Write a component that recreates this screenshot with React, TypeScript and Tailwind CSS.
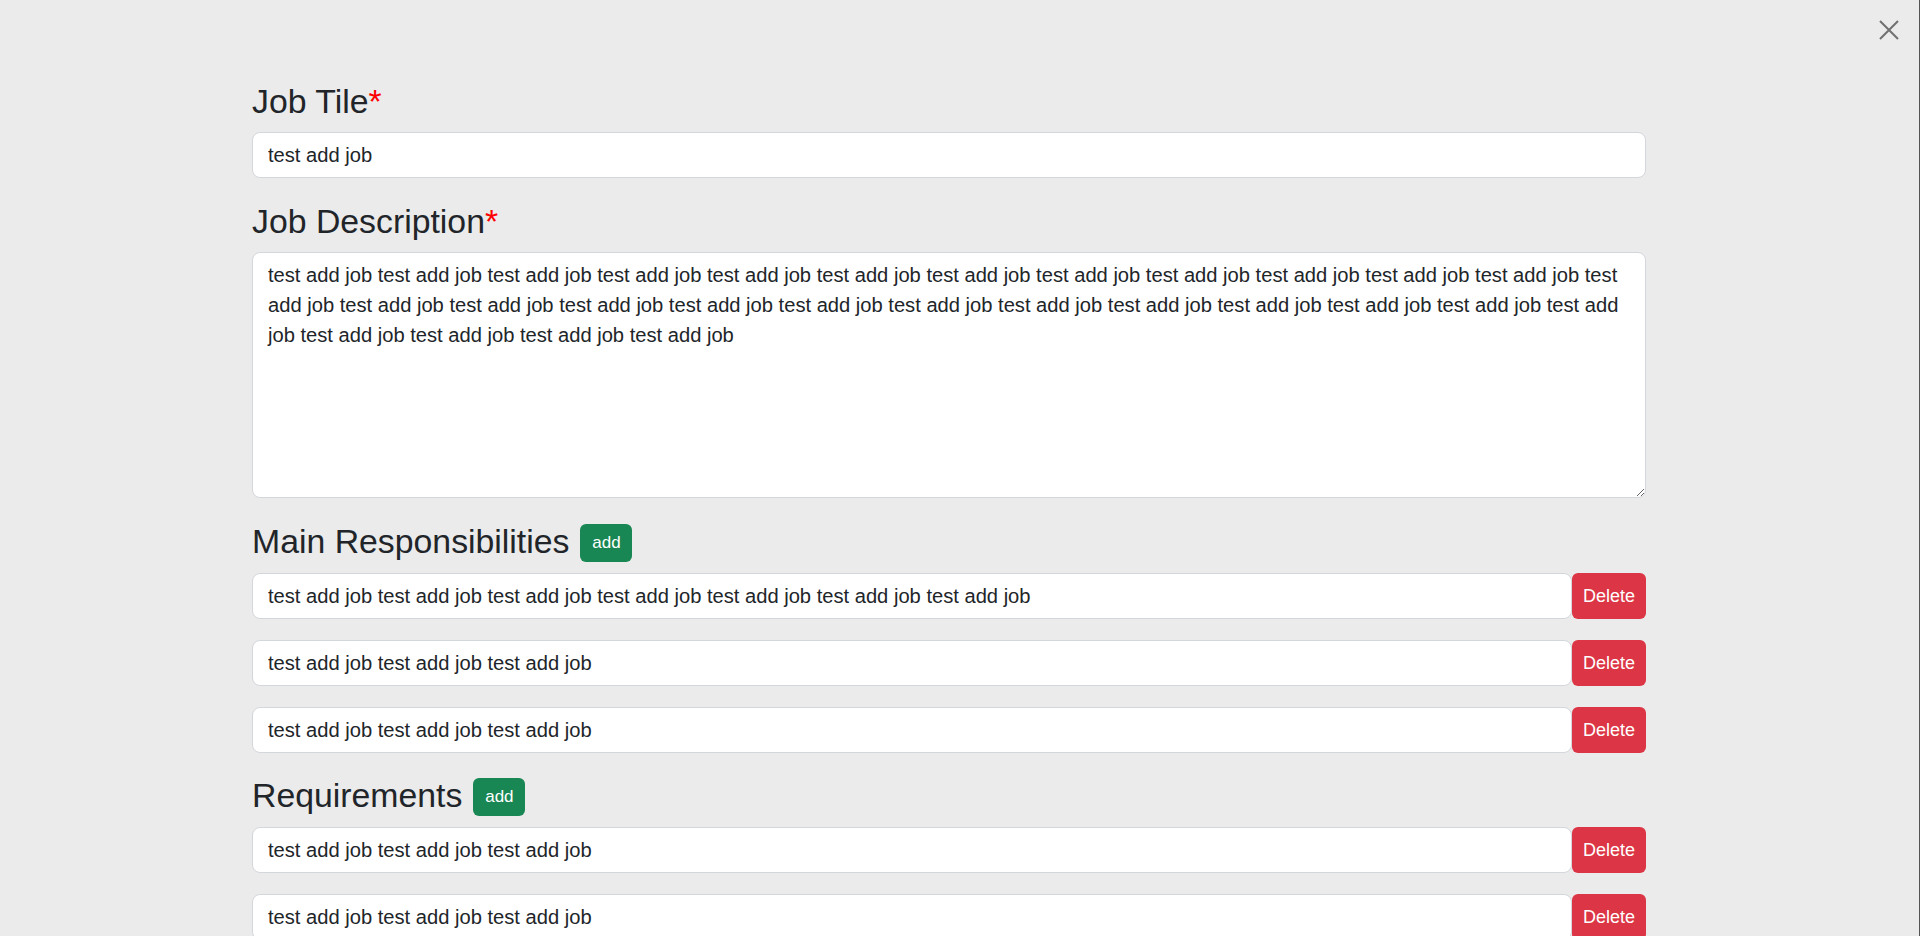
import React from "react";

const font = { fontFamily: '"Liberation Sans", Arial, sans-serif' };

function Heading({ children, req, onAdd }: { children: React.ReactNode; req?: boolean; onAdd?: boolean }) {
  return (
    <div className="flex items-center h-[40px]">
      <span className="text-[33.8px] leading-[40px] text-[#212529] whitespace-nowrap">
        {children}
        {req && <span className="text-[#ff0000]">*</span>}
      </span>
      {onAdd && (
        <button className="ml-[11px] mt-[3px] h-[38px] w-[52px] rounded-[6px] bg-[#198754] text-white text-[17px] leading-[24px] flex items-center justify-center">
          add
        </button>
      )}
    </div>
  );
}

const inputCls =
  "block w-full h-[46px] rounded-[8px] border border-[#d3d6db] bg-white px-[15px] text-[20.15px] text-[#212529] outline-none";

function Row({ text }: { text: string }) {
  return (
    <div className="flex h-[46px]">
      <input readOnly value={text} className={inputCls + " flex-1 min-w-0"} style={font} />
      <button className="w-[74px] h-[46px] rounded-[6px] bg-[#dc3545] text-white text-[18px] flex items-center justify-center shrink-0" style={font}>
        Delete
      </button>
    </div>
  );
}

export default function App() {
  const desc = Array(29).fill("test add job").join(" ");
  const three = "test add job test add job test add job";
  const seven = Array(7).fill("test add job").join(" ");
  return (
    <div className="relative w-[1920px] h-[936px] overflow-hidden bg-[#ebebeb] border-r border-[#555]" style={font}>
      <button className="absolute left-[1879px] top-[20px] w-[20px] h-[20px]">
        <svg width="20" height="20" viewBox="0 0 20 20">
          <path d="M1 1 L19 19 M19 1 L1 19" stroke="#707070" strokeWidth="2" fill="none" />
        </svg>
      </button>
      <div className="ml-[252px] w-[1394px] pt-[81px]">
        <Heading req>Job Tile</Heading>
        <div className="mt-[11px]">
          <input readOnly value="test add job" className={inputCls} style={font} />
        </div>
        <div className="mt-[23px]">
          <Heading req>Job Description</Heading>
        </div>
        <textarea
          readOnly
          value={desc}
          className="mt-[11px] block w-full h-[246px] rounded-[8px] border border-[#d3d6db] bg-white px-[15px] py-[7px] text-[20.15px] leading-[30px] text-[#212529] outline-none"
          style={font}
        />
        <div className="mt-[23px]">
          <Heading onAdd>Main Responsibilities</Heading>
        </div>
        <div className="mt-[12px] flex flex-col gap-[21px]">
          <Row text={seven} />
          <Row text={three} />
          <Row text={three} />
        </div>
        <div className="mt-[22px]">
          <Heading onAdd>Requirements</Heading>
        </div>
        <div className="mt-[12px] flex flex-col gap-[21px]">
          <Row text={three} />
          <Row text={three} />
          <Row text={three} />
        </div>
      </div>
    </div>
  );
}
